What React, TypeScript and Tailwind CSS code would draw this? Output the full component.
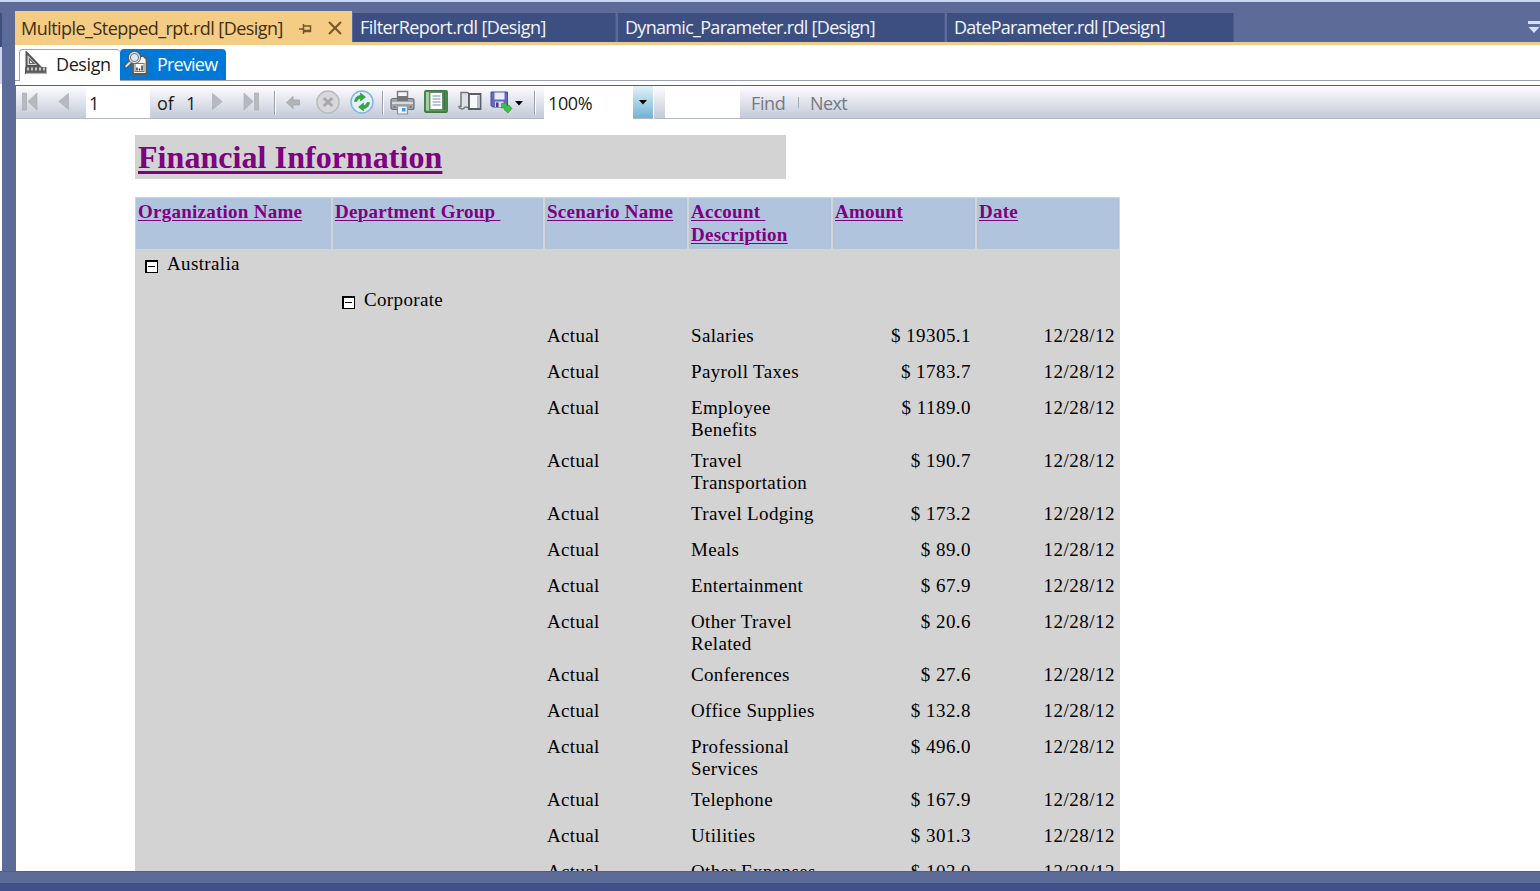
import type { ReactNode } from 'react';

const rows: { account: string[]; amount: string }[] = [
  { account: ['Salaries'], amount: '19305.1' },
  { account: ['Payroll Taxes'], amount: '1783.7' },
  { account: ['Employee', 'Benefits'], amount: '1189.0' },
  { account: ['Travel', 'Transportation'], amount: '190.7' },
  { account: ['Travel Lodging'], amount: '173.2' },
  { account: ['Meals'], amount: '89.0' },
  { account: ['Entertainment'], amount: '67.9' },
  { account: ['Other Travel', 'Related'], amount: '20.6' },
  { account: ['Conferences'], amount: '27.6' },
  { account: ['Office Supplies'], amount: '132.8' },
  { account: ['Professional', 'Services'], amount: '496.0' },
  { account: ['Telephone'], amount: '167.9' },
  { account: ['Utilities'], amount: '301.3' },
  { account: ['Other Expenses'], amount: '103.0' },
];

const grid = 'grid grid-cols-[197px_212px_144px_144px_144px_144px]';

function Tab({ className, children }: { className: string; children: ReactNode }) {
  return (
    <div className={`mt-[2px] h-[29px] shrink-0 border-r border-[#4b5a8a] bg-[#3d4f81] pl-[7px] text-[18px] leading-[29px] whitespace-nowrap text-[#f0f4ff] ${className}`}>
      {children}
    </div>
  );
}

function Separator() {
  return <div className="mt-[5px] h-6 w-[2px] shrink-0 border-r border-white bg-[#9a9fae]" />;
}

function Minus() {
  return (
    <svg width="13" height="13" viewBox="0 0 13 13" className="mt-[10px] shrink-0" shapeRendering="crispEdges">
      <rect width="13" height="13" fill="#000" />
      <rect x="2" y="2" width="10" height="10" fill="#fff" />
      <rect x="3" y="6" width="7" height="1" fill="#000" />
    </svg>
  );
}

function DesignIcon() {
  return (
    <svg width="24" height="24" viewBox="0 0 24 24" className="shrink-0">
      <path d="M2.500 1.500v13.500h13z" fill="#d8d8d8" stroke="#555" strokeWidth="2" />
      <path d="M5.500 8v4.500H10z" fill="#fff" stroke="#666" strokeWidth="1.200" />
      <rect x="1" y="16" width="21.500" height="7" fill="#5c5c5c" />
      <path d="M2 22.500h20.500" stroke="#b5b5b5" strokeWidth="1.200" />
      <path d="M4 16.500v3M8 16.500v3M12 16.500v3M16 16.500v3M20 16.500v3" stroke="#f0f0f0" strokeWidth="1.400" />
    </svg>
  );
}

function PreviewIcon() {
  return (
    <svg width="24" height="24" viewBox="0 0 24 24" className="shrink-0">
      <path d="M9 5h10.500l3 3v15H9z" fill="#f5f5f5" stroke="#5f5a55" strokeWidth="1.800" />
      <rect x="11" y="12.500" width="9" height="8" fill="#fff" stroke="#777" strokeWidth="1" />
      <path d="M13 19.500v-3M15.500 19.500v-2M18 19.500v-5" stroke="#333" strokeWidth="1.500" />
      <path d="M7 10.500L2 15.500" stroke="#555" strokeWidth="4" strokeLinecap="round" />
      <path d="M7 10.500L2.200 15.300" stroke="#dcdcdc" strokeWidth="2" strokeLinecap="round" />
      <circle cx="10.500" cy="6.500" r="5" fill="#d9e9f6" stroke="#5a5a5a" strokeWidth="3" />
      <circle cx="10.500" cy="6.500" r="5" fill="none" stroke="#dedede" strokeWidth="1.300" />
    </svg>
  );
}

function FirstIcon({ flip = false }: { flip?: boolean }) {
  return (
    <svg width="16" height="20" viewBox="0 0 16 20" className={flip ? '-scale-x-100' : ''}>
      <rect x=".5" y="1" width="4" height="17" fill="#b8b9be" stroke="#a5a7ad" strokeWidth=".6" />
      <path d="M15 1v17L6 9.500z" fill="#b8b9be" stroke="#a5a7ad" strokeWidth=".6" />
    </svg>
  );
}

function PrevIcon({ flip = false }: { flip?: boolean }) {
  return (
    <svg width="11" height="18" viewBox="0 0 11 18" className={flip ? '-scale-x-100' : ''}>
      <path d="M10.500.5v16L.8 8.500z" fill="#b8b9be" stroke="#a5a7ad" strokeWidth=".6" />
    </svg>
  );
}

function BackIcon() {
  return (
    <svg width="14" height="13" viewBox="0 0 14 13">
      <path d="M.5 6.500L7 .5v3.500h6.500v5H7v3.500z" fill="#b4b4b8" stroke="#a3a4a9" strokeWidth=".8" />
    </svg>
  );
}

function StopIcon() {
  return (
    <svg width="24" height="24" viewBox="0 0 24 24">
      <circle cx="12" cy="12" r="11" fill="#d8d8da" stroke="#bbbbbf" strokeWidth="1.500" />
      <path d="M7.800 8l8.400 8M16.200 8l-8.400 8" stroke="#a8a8ac" strokeWidth="3" />
    </svg>
  );
}

function RefreshIcon() {
  return (
    <svg width="24" height="24" viewBox="0 0 24 24">
      <circle cx="12" cy="12" r="11" fill="#e4f1fc" stroke="#86b4e0" strokeWidth="1.500" />
      <path d="M4.500 11.500C5 7.500 7.500 5.500 10.500 5.500V3l5 4-5 4V8.500c-2 0-3 1-3.500 3z" fill="#35a83c" stroke="#1d8a2a" strokeWidth=".5" />
      <path d="M19.500 12.500c-.5 4-3 6-6 6V21l-5-4 5-4v2.500c2 0 3-1 3.500-3z" fill="#35a83c" stroke="#1d8a2a" strokeWidth=".5" />
    </svg>
  );
}

function PrintIcon() {
  return (
    <svg width="25" height="25" viewBox="0 0 25 25">
      <path d="M7.500 10V1.500h10V10" fill="#f4f5f7" stroke="#7a7c82" strokeWidth="1.500" />
      <rect x="1" y="8.500" width="23" height="11" rx="2" fill="#a2a4aa" stroke="#6c6e74" strokeWidth="1.200" />
      <path d="M7 6h11v5H7z" fill="#74767c" />
      <path d="M2 13h21" stroke="#d9dade" strokeWidth="2" />
      <path d="M7.500 16h10v8h-10z" fill="#e9f4fc" stroke="#8a929b" strokeWidth="1.200" />
      <path d="M12 18h3.500v3.500H12z" fill="#3c9ae0" />
      <path d="M3.500 17h2M19.500 17h2" stroke="#66696f" strokeWidth="1.500" />
    </svg>
  );
}

function LayoutIcon() {
  return (
    <svg width="24" height="23" viewBox="0 0 24 23">
      <rect x=".8" y=".8" width="22.400" height="21.400" rx="1.200" fill="#549a55" stroke="#3c7541" strokeWidth="1.400" />
      <path d="M2 2h3v18.500H2z" fill="#a5cfa2" />
      <rect x="6" y="2.500" width="12.500" height="17" fill="#fff" stroke="#5d7963" strokeWidth=".8" />
      <path d="M8.500 6h8M8.500 9h8M8.500 12h8M8.500 15h8" stroke="#7888a0" strokeWidth="1.200" />
      <path d="M20.500 2v18" stroke="#347a3b" strokeWidth="2" />
    </svg>
  );
}

function SetupIcon() {
  return (
    <svg width="24" height="20" viewBox="0 0 24 20">
      <path d="M3 1.500h5.500C10 1.500 11 2.300 11 3.500v14c-1-1.300-2-1.500-3.500-1.500-1 0-1.500 2-3 2S1 17 1 15.500h2z" fill="#dfe0e5" stroke="#75777d" strokeWidth="1.500" />
      <path d="M11 3h11.500v15H11z" fill="#f8f8fa" stroke="#5b5d63" strokeWidth="1.800" />
      <path d="M19 4.500h2.500V17H19z" fill="#b9bcc3" />
    </svg>
  );
}

function ExportIcon() {
  return (
    <svg width="23" height="24" viewBox="0 0 23 24">
      <path d="M1 2h16.500v15H2.500L1 15.500z" fill="#6668bd" stroke="#48489c" strokeWidth="1" />
      <rect x="4.500" y="2.500" width="10" height="7" fill="#e9edf9" />
      <rect x="5" y="11.500" width="8.500" height="5.500" fill="#d8daeb" />
      <rect x="6" y="12.500" width="2.500" height="4.500" fill="#414193" />
      <path d="M11.500 13.500h5v2.500l2.500-1 3 3.500-4 4.500-4-3.500 1-1.500h-3.500z" fill="#3fbf49" stroke="#2a9c38" strokeWidth=".7" />
    </svg>
  );
}

function ToolbarButton({ className, children }: { className: string; children: ReactNode }) {
  return <div className={`flex h-8 shrink-0 items-center ${className}`}>{children}</div>;
}

function Toolbar() {
  return (
    <div className="flex h-[34px] border-t border-b border-t-[#5f5f62] border-b-[#b4b8c5] bg-linear-to-b from-[#fdfdff] to-[#c4cad9] text-[18px] leading-[34px] text-[#1c1c1c]">
      <ToolbarButton className="w-[42px] pl-[6px]"><FirstIcon /></ToolbarButton>
      <ToolbarButton className="w-7"><PrevIcon /></ToolbarButton>
      <div className="h-8 w-16 shrink-0 bg-white pl-[3px]">1</div>
      <div className="w-[30px] shrink-0 pl-[7px]">of</div>
      <div className="w-8 shrink-0 pl-[6px]">1</div>
      <ToolbarButton className="w-[31px]"><PrevIcon flip /></ToolbarButton>
      <ToolbarButton className="w-[31px]"><FirstIcon flip /></ToolbarButton>
      <Separator />
      <ToolbarButton className="w-[40px] pl-[10px]"><BackIcon /></ToolbarButton>
      <ToolbarButton className="w-[34px]"><StopIcon /></ToolbarButton>
      <ToolbarButton className="w-[32px]"><RefreshIcon /></ToolbarButton>
      <Separator />
      <ToolbarButton className="w-[40px] pl-[6px]"><PrintIcon /></ToolbarButton>
      <ToolbarButton className="w-[34px] pb-[2px]"><LayoutIcon /></ToolbarButton>
      <ToolbarButton className="w-[32px] pb-[2px]"><SetupIcon /></ToolbarButton>
      <ToolbarButton className="w-[44px] gap-[2px]">
        <ExportIcon />
        <svg width="8" height="5" viewBox="0 0 8 5" className="mt-[2px]"><path d="M0 0h8L4 4.500z" fill="#000" /></svg>
      </ToolbarButton>
      <Separator />
      <div className="ml-[8px] h-[33px] w-[89px] shrink-0 bg-white pl-[4px] tracking-[-0.4px]">100%</div>
      <div className="flex h-8 w-5 shrink-0 items-center justify-center bg-linear-to-b from-[#e4f2f8] to-[#6fb3d6]">
        <svg width="8" height="5" viewBox="0 0 8 5"><path d="M0 0h8L4 4.500z" fill="#000" /></svg>
      </div>
      <div className="h-[33px] w-px shrink-0 bg-white" />
      <div className="ml-[11px] h-8 w-[75px] shrink-0 bg-white" />
      <div className="ml-[11px] w-[47px] shrink-0 tracking-[-0.4px] text-[#77797f]">Find</div>
      <div className="mt-[11px] h-[11px] w-px shrink-0 bg-[#a7abb7]" />
      <div className="ml-[11px] tracking-[-0.6px] text-[#77797f]">Next</div>
    </div>
  );
}

function HeaderCell({ children }: { children: ReactNode }) {
  return (
    <div className="border border-[#d3d3d3] bg-[#b0c4de] pt-[2px] pl-[2px] text-[19px] leading-[23px] font-bold tracking-[0.25px] whitespace-pre text-[#800080] underline decoration-1 underline-offset-2">
      {children}
    </div>
  );
}

function Report() {
  return (
    <div className="h-[752px] overflow-hidden bg-white pt-4 pl-[119px] font-['Liberation_Serif',serif] text-[19px] leading-[22px] tracking-[0.35px] text-black">
      <div className="h-11 w-[651px] bg-[#d3d3d3] pt-[4px] pl-[3px] text-[32px] leading-[36px] font-bold tracking-[0.06px] text-[#800080] underline decoration-[3px] underline-offset-[3px]">
        Financial Information
      </div>
      <div className="mt-[18px] w-[985px] bg-[#d3d3d3]">
        <div className={`${grid} h-[53px]`}>
          <HeaderCell>Organization Name</HeaderCell>
          <HeaderCell>{'Department Group '}</HeaderCell>
          <HeaderCell>Scenario Name</HeaderCell>
          <HeaderCell>{'Account \nDescription'}</HeaderCell>
          <HeaderCell>Amount</HeaderCell>
          <HeaderCell>Date</HeaderCell>
        </div>
        <div className="flex h-9 gap-[9px] pl-[10px]">
          <Minus />
          <span className="pt-[3px]">Australia</span>
        </div>
        <div className="flex h-9 gap-[9px] pl-[207px]">
          <Minus />
          <span className="pt-[3px]">Corporate</span>
        </div>
        {rows.map((row) => (
          <div key={row.account[0]} className={`${grid} pt-[3px] ${row.account.length > 1 ? 'h-[53px]' : 'h-9'}`}>
            <div />
            <div />
            <div className="pl-[3px]">Actual</div>
            <div className="pl-[3px]">
              {row.account.map((line) => <div key={line}>{line}</div>)}
            </div>
            <div className="pr-[5px] text-right tracking-[0.45px]">$ {row.amount}</div>
            <div className="pr-[5px] text-right tracking-[0.5px]">12/28/12</div>
          </div>
        ))}
      </div>
    </div>
  );
}

export default function App() {
  return (
    <div className="flex h-[891px] w-[1540px] flex-col overflow-hidden bg-[#5d6b99] font-['Open_Sans',sans-serif]">
      <div className="h-[2px] shrink-0 bg-[#c9d5f3]" />
      <div className="flex h-[869px] shrink-0">
        <div className="w-[2px] shrink-0 pt-[11px]">
          <div className="h-[34px] bg-[#3d4f81]" />
          <div className="h-[37px] bg-[#cdd6ee]" />
          <div className="h-[787px] bg-white" />
        </div>
        <div className="ml-[13px] flex min-w-0 flex-1 flex-col pt-[9px]">
          <div className="flex h-[34px] shrink-0 border-b-[3px] border-[#f0cc8c]">
            <div className="flex h-[34px] w-[337px] shrink-0 items-center bg-[#f5cc84] pl-[6px] text-[18px] tracking-[-0.54px] text-[#3f2f12]">
              <span className="w-[278px] shrink-0 whitespace-nowrap">Multiple_Stepped_rpt.rdl [Design]</span>
              <svg width="13" height="12" viewBox="0 0 13 12" className="mt-[2px]" fill="none" stroke="#75552a" strokeWidth="1.500">
                <path d="M0 6h4M4.500 1v10M4.500 3h7v5.500h-7M4.500 7.500h7" />
              </svg>
              <svg width="14" height="14" viewBox="0 0 14 14" className="ml-[16px]" stroke="#75552a" strokeWidth="2">
                <path d="M1 1l12 12M13 1L1 13" />
              </svg>
            </div>
            <Tab className="ml-px w-[263px] tracking-[-0.58px]">FilterReport.rdl [Design]</Tab>
            <Tab className="ml-[2px] w-[327px] tracking-[-0.7px]">Dynamic_Parameter.rdl [Design]</Tab>
            <Tab className="ml-[2px] w-[287px] tracking-[-0.72px]">DateParameter.rdl [Design]</Tab>
            <svg width="13" height="13" viewBox="0 0 13 13" className="mt-[10px] -mr-px ml-auto">
              <path d="M0 0h12v3H0zM.5 6h11L6 12z" fill="#d5e0ff" />
            </svg>
          </div>
          <div className="flex h-10 shrink-0 bg-white text-[18px] leading-8">
            <div className="flex h-9 w-full border-b border-[#9ba1bb] pt-[4px] pl-[4px]">
              <div className="flex h-8 w-[101px] rounded-t border-t border-l border-[#9ba1bb] bg-white pt-px pl-[4px] text-[#1c1c1c]">
                <DesignIcon />
                <span className="-mt-[3px] ml-[8px] tracking-[-0.4px]">Design</span>
              </div>
              <div className="flex h-[31px] w-[106px] rounded-t bg-[#0078d7] pt-[2px] pl-[4px] text-white">
                <PreviewIcon />
                <span className="-mt-[3px] ml-[9px] tracking-[-0.8px]">Preview</span>
              </div>
            </div>
          </div>
          <div className="ml-px">
            <Toolbar />
            <Report />
          </div>
        </div>
      </div>
      <div className="h-[12px] shrink-0 border-t border-[#535f80]" />
      <div className="h-2 shrink-0 bg-[#414f8b]" />
    </div>
  );
}
